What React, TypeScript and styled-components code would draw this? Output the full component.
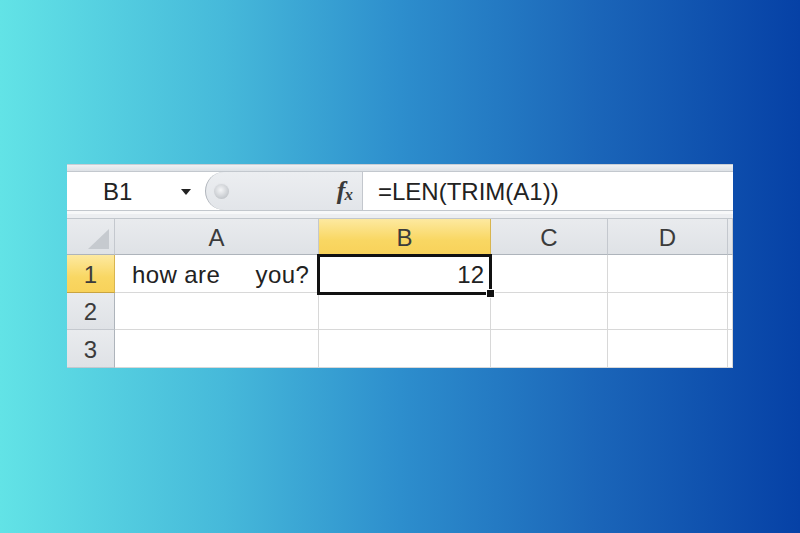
import React from 'react';
import styled, { createGlobalStyle, css } from 'styled-components';

const GlobalStyle = createGlobalStyle`
  html, body {
    margin: 0;
    padding: 0;
  }
  body {
    font-family: "Liberation Sans", Arial, sans-serif;
  }
`;

const Page = styled.div`
  width: 800px;
  height: 533px;
  box-sizing: border-box;
  padding: 164px 0 0 67px;
  background: linear-gradient(
    90deg,
    #62e3e6 0%,
    #46b9da 28%,
    #2d8ecd 50%,
    #1b66b9 74%,
    #0641a6 100%
  );
  overflow: hidden;
`;

const Sheet = styled.div`
  width: 666px;
  display: flex;
  flex-direction: column;
  background: #fff;
  color: #222;
  font-size: 24px;
`;

const TopStrip = styled.div`
  height: 8px;
  box-sizing: border-box;
  background: linear-gradient(#eef0f3, #dde1e6);
  border-top: 1px solid #c9ced5;
  border-bottom: 1px solid #c3c8ce;
`;

const FormulaBar = styled.div`
  height: 38px;
  display: flex;
  background: #fff;
`;

const NameBox = styled.div`
  width: 138px;
  display: flex;
  align-items: center;
  box-sizing: border-box;
  padding: 2px 0 0 36px;
`;

const NameText = styled.span`
  flex: 1;
`;

const DropArrow = styled.span`
  width: 0;
  height: 0;
  margin-right: 14px;
  border-left: 5px solid transparent;
  border-right: 5px solid transparent;
  border-top: 6px solid #222;
`;

const FxZone = styled.div`
  width: 157px;
  display: flex;
  align-items: center;
  box-sizing: border-box;
  background: linear-gradient(#eceef1, #e2e5e9);
  border-left: 1.5px solid #aeb3ba;
  border-radius: 19px 0 0 19px;
  padding: 0 10px 0 8px;
`;

const Knob = styled.span`
  width: 15px;
  height: 15px;
  border-radius: 50%;
  background: radial-gradient(circle at 45% 40%, #f4f5f7 0%, #cfd2d6 55%, #aeb2b8 100%);
  box-shadow: 0 0 0 1px #e6e8eb;
`;

const Fx = styled.span`
  margin-left: auto;
  font-family: "Liberation Serif", "Times New Roman", serif;
  font-style: italic;
  font-weight: bold;
  font-size: 26px;
  color: #3a3a3a;
  letter-spacing: -1px;

  sub {
    font-size: 17px;
    vertical-align: -1px;
  }
`;

const FormulaInput = styled.div`
  flex: 1;
  display: flex;
  align-items: center;
  box-sizing: border-box;
  border-left: 1px solid #c3c7cd;
  padding: 2px 0 0 15px;
`;

const MidStrip = styled.div`
  height: 9px;
  box-sizing: border-box;
  background: #eceef1;
  border-top: 1px solid #c2c7cd;
  border-bottom: 1px solid #c2c7cd;
  box-shadow: inset 0 3px 0 #f7f8f9;
`;

const Grid = styled.div`
  display: grid;
  grid-template-columns: 48px 204px 172px 117px 120px 5px;
  grid-template-rows: 36px 38px 37px 38px;
`;

type CellProps = {
  $kind?: 'head' | 'rowhead' | 'body';
  $active?: boolean;
  $align?: 'left' | 'center' | 'right';
  $selected?: boolean;
};

const Cell = styled.div<CellProps>`
  position: relative;
  display: flex;
  align-items: center;
  box-sizing: border-box;
  border-right: 1px solid #d8d8d8;
  border-bottom: 1px solid #d8d8d8;
  white-space: pre;
  justify-content: ${(p) =>
    p.$align === 'right' ? 'flex-end' : p.$align === 'left' ? 'flex-start' : 'center'};
  padding: ${(p) => (p.$align === 'left' ? '2px 0 0 17px' : p.$align === 'right' ? '2px 6px 0 0' : '2px 0 0 0')};
  background: #fff;

  ${(p) =>
    (p.$kind === 'head' || p.$kind === 'rowhead') &&
    css`
      color: #3b3b3b;
      background: linear-gradient(#e9ebee, #dfe2e6);
      border-right-color: #c4c8ce;
      border-bottom-color: #c4c8ce;
    `}

  ${(p) =>
    p.$kind === 'head' &&
    css`
      border-bottom-color: #aeb4bb;
    `}

  ${(p) =>
    p.$kind === 'rowhead' &&
    css`
      border-right-color: #aeb4bb;
    `}

  ${(p) =>
    p.$active &&
    css`
      background: linear-gradient(#fde9a0, #f9d763 60%, #f8d25a);
      border-right-color: #d8b54f;
      border-bottom-color: #c9a440;
    `}

  ${(p) =>
    p.$selected &&
    css`
      z-index: 1;
      &::before {
        content: '';
        position: absolute;
        left: -2px;
        top: -1px;
        right: -2px;
        bottom: -3px;
        border: 3px solid #111;
      }
      &::after {
        content: '';
        position: absolute;
        right: -5px;
        bottom: -6px;
        width: 7px;
        height: 7px;
        background: #111;
        border: 1px solid #fff;
      }
    `}
`;

const Corner = styled(Cell)`
  align-items: flex-end;
  justify-content: flex-end;
  padding: 0 5px 5px 0;
`;

const CellText = styled.span`
  letter-spacing: 0.4px;
`;

const columns = ['A', 'B', 'C', 'D', ''];

const rows: { n: string; a: string; b: string }[] = [
  { n: '1', a: 'how are     you?', b: '12' },
  { n: '2', a: '', b: '' },
  { n: '3', a: '', b: '' },
];

export default function App() {
  return (
    <Page>
      <GlobalStyle />
      <Sheet>
        <TopStrip />
        <FormulaBar>
          <NameBox>
            <NameText>B1</NameText>
            <DropArrow />
          </NameBox>
          <FxZone>
            <Knob />
            <Fx>
              f<sub>x</sub>
            </Fx>
          </FxZone>
          <FormulaInput>=LEN(TRIM(A1))</FormulaInput>
        </FormulaBar>
        <MidStrip />
        <Grid>
          <Corner $kind="head">
            <svg width="21" height="20" viewBox="0 0 21 20">
              <polygon points="21,0 21,20 0,20" fill="#c6cacf" />
            </svg>
          </Corner>
          {columns.map((c) => (
            <Cell key={c || 'edge'} $kind="head" $active={c === 'B'}>
              {c}
            </Cell>
          ))}
          {rows.map((r) => (
            <React.Fragment key={r.n}>
              <Cell $kind="rowhead" $active={r.n === '1'}>
                {r.n}
              </Cell>
              <Cell $align="left">
                <CellText>{r.a}</CellText>
              </Cell>
              <Cell $align="right" $selected={r.n === '1'}>
                {r.b}
              </Cell>
              <Cell />
              <Cell />
              <Cell />
            </React.Fragment>
          ))}
        </Grid>
      </Sheet>
    </Page>
  );
}
